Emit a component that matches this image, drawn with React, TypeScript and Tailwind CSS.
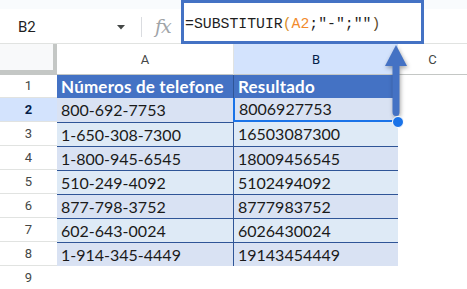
import React from "react";

const rows = [
  ["800-692-7753", "8006927753"],
  ["1-650-308-7300", "16503087300"],
  ["1-800-945-6545", "18009456545"],
  ["510-249-4092", "5102494092"],
  ["877-798-3752", "8777983752"],
  ["602-643-0024", "6026430024"],
  ["1-914-345-4449", "19143454449"],
];

export default function App() {
  return (
    <div className="relative w-[467px] h-[289px] overflow-hidden bg-white font-['Roboto',sans-serif]">
      {/* toolbar */}
      <div className="flex h-[44px]">
        <div className="w-[181px] flex flex-col border-b border-[#e1e3e1]">
          <div className="h-[9px] bg-[#f9fbfd]" />
          <div className="flex-1 flex items-center">
            <span className="ml-[18px] w-[99px] text-[15px] leading-none text-[#1f1f1f] pt-[3px]">B2</span>
            <svg width="8" height="5" viewBox="0 0 8 5" className="mt-[2px]">
              <path d="M0 0 L8 0 L4 4.5 Z" fill="#444746" />
            </svg>
            <div className="ml-[16px] w-[1px] h-[20px] bg-[#dadce0] mt-[2px]" />
            <span className="ml-[13px] text-[19px] leading-none italic text-[#a0a4a8] font-['DejaVu_Serif',serif] tracking-[-1px] pt-[1px]">fx</span>
          </div>
        </div>
        <div className="w-[243px] h-[44px] border-[3px] border-[#4472c4] bg-white flex items-center pl-[1px] pt-[5px]">
          <span className="font-['Liberation_Mono',monospace] text-[14.8px] leading-none text-[#1f1f1f] whitespace-pre">
            =SUBSTITUIR<span className="text-[#d8902a]">(</span>
            <span className="text-[#f28b2c]">A2</span>;"-";""<span className="text-[#5c4a2a]">)</span>
          </span>
        </div>
        <div className="flex-1 flex flex-col border-b border-[#e1e3e1]">
          <div className="h-[9px] bg-[#f9fbfd]" />
        </div>
      </div>

      {/* column headers */}
      <div className="flex h-[31px] text-[13px] leading-none">
        <div className="w-[57px] h-[31px] bg-[#f8f9fa] border-r-[4px] border-b-[5px] border-[#c4c7c5]" />
        <div className="w-[177px] flex items-center justify-center border-b border-[#c4c7c5] border-r border-r-[#e1e3e1] text-[#444746]">
          A
        </div>
        <div className="w-[164px] flex items-center justify-center bg-[#d3e3fd] border-b border-[#c4c7c5] text-[#041e49]">
          B
        </div>
        <div className="flex-1 flex items-center justify-center border-b border-[#c4c7c5] text-[#444746]">
          C
        </div>
      </div>

      {/* row 1 header */}
      <div className="flex h-[23px]">
        <div className="w-[57px] flex items-center justify-center text-[13px] text-[#444746] border-b border-[#e1e3e1]">1</div>
        <div className="w-[177px] bg-[#4472c4] border-r border-[#2f5597] flex items-center pl-[4px] font-['Lato',sans-serif] font-bold text-[17px] tracking-[0.2px] text-white">
          Números de telefone
        </div>
        <div className="w-[164px] bg-[#4472c4] flex items-center pl-[4px] font-['Lato',sans-serif] font-bold text-[17px] tracking-[0.2px] text-white">
          Resultado
        </div>
      </div>

      {rows.map((r, i) => {
        const n = i + 2;
        const dark = i % 2 === 0;
        const bg = dark ? "bg-[#d9e2f3]" : "bg-[#deeaf6]";
        const sel = n === 2;
        return (
          <div key={n} className="flex h-[24px]">
            <div
              className={
                "w-[57px] flex items-center justify-center text-[13px] border-b border-[#e1e3e1] " +
                (sel ? "bg-[#d3e3fd] text-[#041e49] font-bold" : "text-[#444746]")
              }
            >
              {n}
            </div>
            <div
              className={
                "w-[177px] flex items-center pl-[4px] font-['Lato',sans-serif] text-[16px] text-[#1a1a1a] " +
                bg +
                (sel ? " border-r-2 border-[#1a73e8] w-[178px]" : " border-r border-[#2f5597]") +
                (i > 0 ? " border-t border-t-[#2f5597]" : "")
              }
            >
              {r[0]}
            </div>
            <div
              className={
                "w-[164px] flex items-center pl-[4px] font-['Lato',sans-serif] text-[16px] text-[#1a1a1a] " +
                bg +
                (sel ? " border-b-2 border-[#1a73e8] w-[163px] pl-[3px]" : "") +
                (i > 1 ? " border-t border-t-[#2f5597]" : "")
              }
            >
              {r[1]}
            </div>
          </div>
        );
      })}

      {/* row 9 */}
      <div className="flex h-[23px]">
        <div className="w-[57px] flex items-center justify-center text-[13px] text-[#444746]">9</div>
      </div>

      {/* arrow overlay */}
      <svg
        className="absolute left-[378px] top-[40px]"
        width="36"
        height="82"
        viewBox="0 0 36 82"
        style={{ filter: "drop-shadow(1px 2px 2px rgba(0,0,0,0.35))" }}
      >
        <path d="M18 5 L29 26 L7 26 Z" fill="#4472c4" />
        <path d="M14.5 25 L21.5 25 L21.5 72 Q21.5 76 18 76 Q14.5 76 14.5 72 Z" fill="#4472c4" />
      </svg>

      {/* fill handle */}
      <div className="absolute left-[392px] top-[116px] w-[12px] h-[12px] rounded-full bg-[#1a73e8] border border-white" />
    </div>
  );
}
